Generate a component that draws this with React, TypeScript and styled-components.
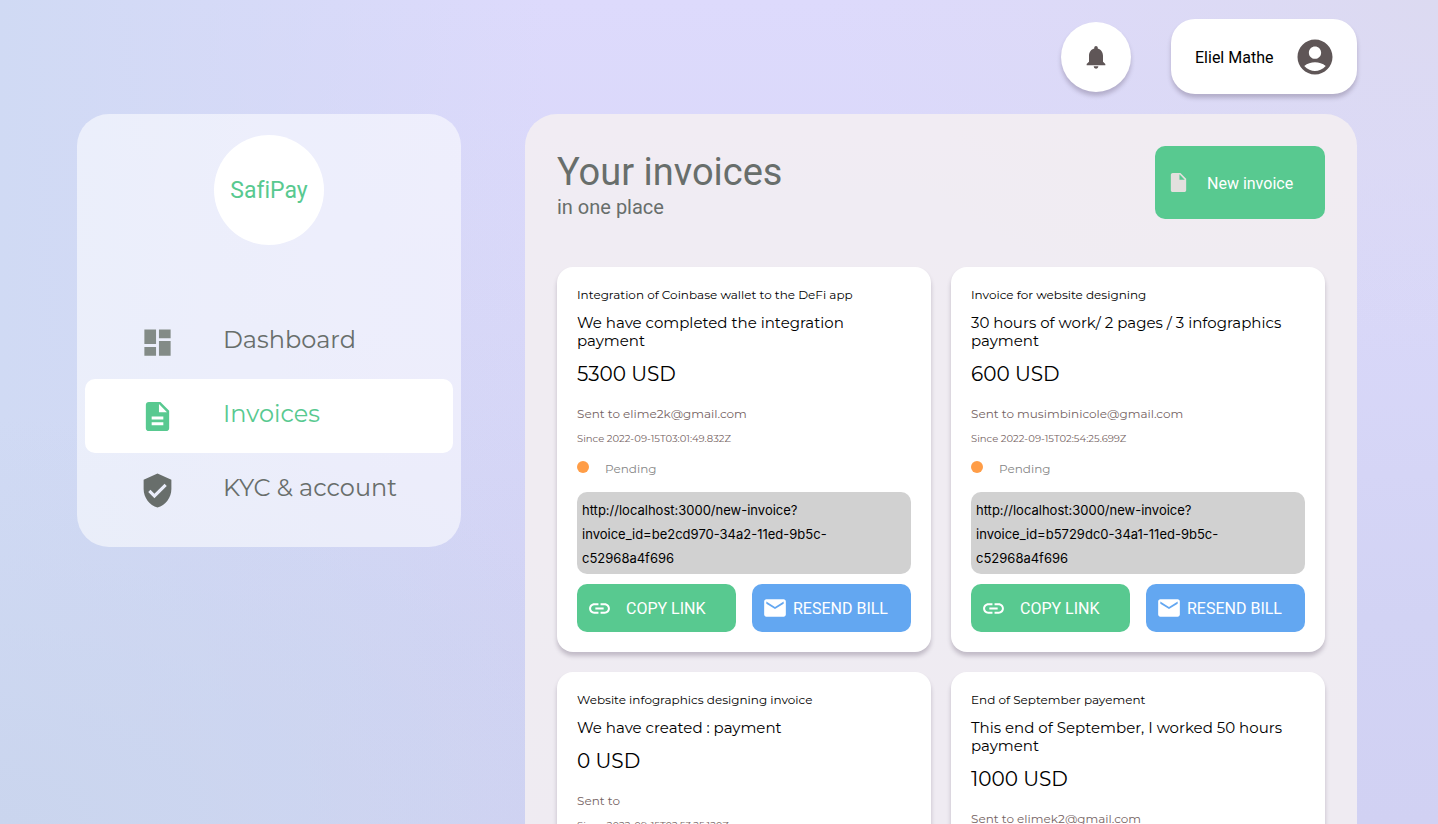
import React from 'react';
import styled, { createGlobalStyle } from 'styled-components';
import {
  MdAccountCircle,
  MdDashboard,
  MdDescription,
  MdEmail,
  MdInsertDriveFile,
  MdLink,
  MdNotifications,
  MdVerifiedUser,
} from 'react-icons/md';

const ui = `Roboto, 'Liberation Sans', sans-serif`;
const text = `Montserrat, Inter, 'Liberation Sans', sans-serif`;
const green = '#58c990';
const grey = '#686e6b';
const shadow = '0 4px 4px rgba(60, 45, 70, 0.25)';

const GlobalStyle = createGlobalStyle`
  *, *::before, *::after { box-sizing: border-box; }
  body {
    margin: 0;
    min-height: 100vh;
    font-family: ${text};
    font-variant-ligatures: none;
    color: #000;
    background:
      radial-gradient(ellipse at 0% 100%, #cad5ee 0%, rgba(202, 213, 238, 0) 35%),
      radial-gradient(ellipse at 100% 0%, #dcdaf1 0%, rgba(220, 218, 241, 0) 30%),
      linear-gradient(90deg, #d0daf4 0%, rgba(208, 218, 244, 0) 38%),
      linear-gradient(180deg, #dddafc 0%, #d8d7f8 40%, #d2d3f4 75%, #d1d1f3 100%);
    background-attachment: fixed;
  }
  h1, h2, p { margin: 0; padding: 0; font-weight: 400; }
  button { border: 0; padding: 0; cursor: pointer; font-variant-ligatures: none; }
`;

const Page = styled.div`
  padding: 19px 81px 40px 77px;
`;

const TopBar = styled.header`
  display: flex;
  justify-content: flex-end;
  align-items: center;
  gap: 40px;
  margin-bottom: 20px;
`;

const Label = styled.span`
  padding-top: 2px;
`;

const BellButton = styled.button`
  display: grid;
  place-items: center;
  width: 70px;
  height: 70px;
  border-radius: 50%;
  background: #fff;
  color: #5f5657;
  box-shadow: ${shadow};
`;

const ProfileButton = styled.button`
  display: flex;
  align-items: center;
  justify-content: space-between;
  width: 186px;
  height: 75px;
  padding: 0 21px 0 24px;
  border-radius: 24px;
  background: #fff;
  font: 16px/20px ${ui};
  color: #000;
  box-shadow: ${shadow};
  svg { color: #5f5657; }
`;

const Columns = styled.div`
  display: grid;
  grid-template-columns: 30% 65%;
  justify-content: space-between;
  align-items: start;
`;

const Sidebar = styled.aside`
  display: flex;
  flex-direction: column;
  align-items: center;
  gap: 60px;
  padding: 21px 8px 20px;
  border-radius: 32px;
  background: rgba(255, 255, 255, 0.56);
`;

const Logo = styled.div`
  display: grid;
  place-items: center;
  width: 110px;
  height: 110px;
  border-radius: 50%;
  background: #fff;
  color: ${green};
  font: 23px/28px ${ui};
  font-variant-ligatures: none;
`;

const Nav = styled.nav`
  align-self: stretch;
`;

const NavLink = styled.a<{ $active?: boolean }>`
  display: grid;
  grid-template-columns: 36px 1fr;
  align-items: center;
  gap: 48px;
  height: 74px;
  padding-left: 54px;
  border-radius: 10px;
  background: ${p => (p.$active ? '#fff' : 'transparent')};
  color: ${p => (p.$active ? green : grey)};
  font-size: 24px;
  line-height: 28px;
  white-space: nowrap;
  text-decoration: none;
  svg { justify-self: center; }
  span { padding-bottom: 4px; }
`;

const Main = styled.main`
  padding: 32px;
  border-radius: 32px;
  background: rgba(243, 239, 241, 0.87);
`;

const MainHeader = styled.div`
  display: flex;
  justify-content: space-between;
  align-items: flex-start;
  margin-bottom: 48px;
`;

const Title = styled.h1`
  font: 38px/46px ${ui};
  color: ${grey};
  padding-top: 3px;
`;

const Subtitle = styled.p`
  font: 20px/24px ${ui};
  color: ${grey};
`;

const NewInvoice = styled.button`
  display: flex;
  align-items: center;
  gap: 17px;
  width: 170px;
  height: 73px;
  padding: 0 12px;
  border-radius: 10px;
  background: ${green};
  color: #fff;
  font: 16px/20px ${ui};
  svg { color: #e3e0de; }
`;

const Cards = styled.div`
  display: grid;
  grid-template-columns: repeat(2, minmax(0, 1fr));
  gap: 20px;
`;

const Card = styled.article`
  padding: 20px;
  border-radius: 16px;
  background: #fff;
  box-shadow: ${shadow};
`;

const CardTitle = styled.h2`
  font-size: 12px;
  line-height: 15px;
  margin-bottom: 12px;
`;

const Description = styled.p`
  font-size: 15px;
  line-height: 18px;
  margin-bottom: 12px;
`;

const Amount = styled.p`
  font-size: 20px;
  line-height: 24px;
  margin-bottom: 20px;
`;

const Recipient = styled.p`
  font-size: 12px;
  line-height: 15px;
  margin-bottom: 12px;
  color: #756363;
`;

const Since = styled.p`
  font-size: 10px;
  line-height: 12px;
  margin-bottom: 16px;
  color: #756363;
`;

const Status = styled.p`
  display: flex;
  align-items: flex-start;
  gap: 16px;
  margin-bottom: 16px;
  font-size: 12px;
  line-height: 15px;
  color: #868686;
  &::before {
    content: '';
    width: 12px;
    height: 12px;
    border-radius: 50%;
    background: #ff9d47;
  }
`;

const LinkBox = styled.p`
  padding: 6px 5px 4px;
  margin-bottom: 10px;
  border-radius: 10px;
  background: #d1d1d1;
  font: 13px/24px Inter, sans-serif;
`;

const Actions = styled.div`
  display: grid;
  grid-template-columns: 1fr 1fr;
  gap: 16px;
`;

const Action = styled.button<{ $blue?: boolean }>`
  display: flex;
  align-items: center;
  gap: ${p => (p.$blue ? 5 : 14)}px;
  height: 48px;
  padding: 0 10px;
  border-radius: 10px;
  background: ${p => (p.$blue ? '#63a7f1' : green)};
  color: #fff;
  font: 16px/20px ${ui};
  white-space: nowrap;
`;

const invoices = [
  {
    id: 'be2cd970-34a2-11ed-9b5c-c52968a4f696',
    title: 'Integration of Coinbase wallet to the DeFi app',
    description: 'We have completed the integration payment',
    amount: 5300,
    email: 'elime2k@gmail.com',
    since: '2022-09-15T03:01:49.832Z',
  },
  {
    id: 'b5729dc0-34a1-11ed-9b5c-c52968a4f696',
    title: 'Invoice for website designing',
    description: '30 hours of work/ 2 pages / 3 infographics payment',
    amount: 600,
    email: 'musimbinicole@gmail.com',
    since: '2022-09-15T02:54:25.699Z',
  },
  {
    id: '91ab3c40-34a1-11ed-9b5c-c52968a4f696',
    title: 'Website infographics designing invoice',
    description: 'We have created : payment',
    amount: 0,
    email: '',
    since: '2022-09-15T02:53:25.120Z',
  },
  {
    id: '6f2d8e10-34a1-11ed-9b5c-c52968a4f696',
    title: 'End of September payement',
    description: 'This end of September, I worked 50 hours payment',
    amount: 1000,
    email: 'elimek2@gmail.com',
    since: '2022-09-15T02:52:27.441Z',
  },
];

export default function App() {
  return (
    <>
      <GlobalStyle />
      <Page>
        <TopBar>
          <BellButton aria-label="Notifications">
            <MdNotifications size={28} />
          </BellButton>
          <ProfileButton>
            <Label>Eliel Mathe</Label>
            <MdAccountCircle size={42} />
          </ProfileButton>
        </TopBar>
        <Columns>
          <Sidebar>
            <Logo>
              <Label>SafiPay</Label>
            </Logo>
            <Nav>
              <NavLink href="#dashboard">
                <MdDashboard size={35} color="#838b87" />
                <span>Dashboard</span>
              </NavLink>
              <NavLink href="#invoices" $active aria-current="page">
                <MdDescription size={35} />
                <span>Invoices</span>
              </NavLink>
              <NavLink href="#account">
                <MdVerifiedUser size={37} />
                <span>KYC &amp; account</span>
              </NavLink>
            </Nav>
          </Sidebar>
          <Main>
            <MainHeader>
              <div>
                <Title>Your invoices</Title>
                <Subtitle>in one place</Subtitle>
              </div>
              <NewInvoice>
                <MdInsertDriveFile size={23} />
                <Label>New invoice</Label>
              </NewInvoice>
            </MainHeader>
            <Cards>
              {invoices.map(invoice => (
                <Card key={invoice.id}>
                  <CardTitle>{invoice.title}</CardTitle>
                  <Description>{invoice.description}</Description>
                  <Amount>{invoice.amount} USD</Amount>
                  <Recipient>Sent to {invoice.email}</Recipient>
                  <Since>Since {invoice.since}</Since>
                  <Status>Pending</Status>
                  <LinkBox>http://localhost:3000/new-invoice?invoice_id={invoice.id}</LinkBox>
                  <Actions>
                    <Action>
                      <MdLink size={25} />
                      <Label>COPY LINK</Label>
                    </Action>
                    <Action $blue>
                      <MdEmail size={26} />
                      <Label>RESEND BILL</Label>
                    </Action>
                  </Actions>
                </Card>
              ))}
            </Cards>
          </Main>
        </Columns>
      </Page>
    </>
  );
}
